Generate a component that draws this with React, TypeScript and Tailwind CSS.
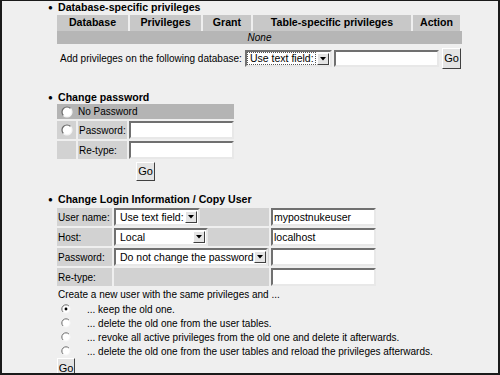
import React from "react";

const font = { fontFamily: '"Liberation Sans", Arial, sans-serif' };

function Radio({ checked = false, size = 12 }: { checked?: boolean; size?: number }) {
  return (
    <svg width={size} height={size} viewBox="0 0 12 12" className="shrink-0">
      <circle cx="6" cy="6" r="5" fill="#ffffff" />
      <path d="M2.46 9.54 A5 5 0 0 1 9.54 2.46" fill="none" stroke="#6a6a6a" strokeWidth="1.2" />
      <path d="M9.54 2.46 A5 5 0 0 1 2.46 9.54" fill="none" stroke="#f4f4f4" strokeWidth="1.2" />
      {checked && <circle cx="6" cy="6" r="1.7" fill="#000" />}
    </svg>
  );
}

function Go({ className = "" }: { className?: string }) {
  return (
    <div
      className={
        "flex items-center justify-center bg-[#e4e4e4] border border-t-white border-l-white border-b-[#404040] border-r-[#404040] text-[11px] text-black " +
        className
      }
    >
      Go
    </div>
  );
}

function Input({ value = "", className = "" }: { value?: string; className?: string }) {
  return (
    <div
      className={
        "bg-white border-2 border-t-[#707070] border-l-[#707070] border-b-[#e8e8e8] border-r-[#e8e8e8] text-[10.5px] leading-none flex items-center pl-[1px] whitespace-nowrap " +
        className
      }
    >
      {value}
    </div>
  );
}

function Select({ value, className = "", dotted = false }: { value: string; className?: string; dotted?: boolean }) {
  return (
    <div
      className={
        "bg-white border-2 border-t-[#707070] border-l-[#707070] border-b-[#e8e8e8] border-r-[#e8e8e8] flex items-center justify-between text-[10.5px] leading-none whitespace-nowrap " +
        className
      }
    >
      <span className={dotted ? "outline outline-1 outline-dotted outline-[#555] ml-[1px] pl-[2px] pr-[1px]" : "pl-[4px]"}>{value}</span>
      <div className="w-[12px] h-[12px] mr-[1px] bg-[#e4e4e4] border border-t-white border-l-white border-b-[#404040] border-r-[#404040] flex items-center justify-center shrink-0">
        <svg width="6" height="4" viewBox="0 0 6 4">
          <path d="M0 0 H6 L3 3.5 Z" fill="#000" />
        </svg>
      </div>
    </div>
  );
}

function Heading({ children }: { children: React.ReactNode }) {
  return (
    <div className="flex items-center h-[13px] text-[10.6px] font-bold text-black leading-none whitespace-nowrap">
      <span className="w-[9px] ml-[46px] text-[8px]">●</span>
      <span className="ml-[1px]">{children}</span>
    </div>
  );
}

export default function App() {
  return (
    <div
      style={font}
      className="w-[500px] h-[375px] overflow-hidden bg-[#efefef] border-2 border-t border-[#1a1a1a] text-black flex flex-col text-[10px] whitespace-nowrap"
    >
      {/* Section 1 */}
      <div>
        <Heading>Database-specific privileges</Heading>
        <div className="ml-[55px] mt-[1px] w-[405px] flex flex-col gap-[1px]">
          <div className="grid grid-cols-[71px_71px_48px_158px_47px] gap-[2px] h-[15px] text-[10.6px] font-bold">
            <div className="bg-[#c8c8c8] flex items-center justify-center">Database</div>
            <div className="bg-[#c8c8c8] flex items-center justify-center">Privileges</div>
            <div className="bg-[#c8c8c8] flex items-center justify-center">Grant</div>
            <div className="bg-[#c8c8c8] flex items-center justify-center">Table-specific privileges</div>
            <div className="bg-[#c8c8c8] flex items-center justify-center">Action</div>
          </div>
          <div className="bg-[#b6b6b6] h-[13px] flex items-center justify-center italic">None</div>
        </div>
        <div className="ml-[57px] mt-[4px] flex items-center h-[21px]">
          <span className="w-[185px] pl-[1px]">Add privileges on the following database:</span>
          <Select value="Use text field:" dotted className="w-[87px] h-[17px] ml-[1px]" />
          <Input className="w-[105px] h-[17px] ml-[2px]" />
          <Go className="w-[19px] h-[21px] ml-[3px]" />
        </div>
      </div>

      {/* Section 2 */}
      <div className="mt-[22px]">
        <Heading>Change password</Heading>
        <div className="ml-[55px] w-[177px] flex flex-col gap-[2px]">
          <div className="bg-[#b4b4b4] h-[15px] flex items-center">
            <div className="w-[20px] flex justify-center">
              <Radio />
            </div>
            <span className="ml-[1px]">No Password</span>
          </div>
          <div className="h-[18px] flex gap-[2px]">
            <div className="w-[19px] bg-[#d2d2d2] flex items-center justify-center">
              <Radio />
            </div>
            <div className="w-[49px] bg-[#d2d2d2] flex items-center pl-[1px]">Password:</div>
            <Input className="flex-1 h-[18px]" />
          </div>
          <div className="h-[18px] flex gap-[2px]">
            <div className="w-[19px] bg-[#d2d2d2]" />
            <div className="w-[49px] bg-[#d2d2d2] flex items-center pl-[1px]">Re-type:</div>
            <Input className="flex-1 h-[18px]" />
          </div>
        </div>
        <div className="ml-[55px] w-[177px] flex justify-center mt-[3px]">
          <Go className="w-[19px] h-[19px]" />
        </div>
      </div>

      {/* Section 3 */}
      <div className="mt-[12px]">
        <Heading>Change Login Information / Copy User</Heading>
        <div className="ml-[55px] mt-[2px] flex flex-col gap-[2px]">
          <div className="flex h-[18px] gap-[2px]">
            <div className="w-[55px] bg-[#d2d2d2] flex items-center pl-[1px]">User name:</div>
            <div className="w-[155px] bg-[#d2d2d2] flex items-center">
              <Select value="Use text field:" className="w-[86px] h-[18px]" />
            </div>
            <Input value="mypostnukeuser" className="w-[105px] h-[18px]" />
          </div>
          <div className="flex h-[18px] gap-[2px]">
            <div className="w-[55px] bg-[#d2d2d2] flex items-center pl-[1px]">Host:</div>
            <div className="w-[155px] bg-[#d2d2d2] flex items-center">
              <Select value="Local" className="w-[94px] h-[18px]" />
            </div>
            <Input value="localhost" className="w-[105px] h-[18px]" />
          </div>
          <div className="flex h-[18px] gap-[2px]">
            <div className="w-[55px] bg-[#d2d2d2] flex items-center pl-[1px]">Password:</div>
            <div className="w-[155px] bg-[#d2d2d2] flex items-center">
              <Select value="Do not change the password" className="w-[154px] h-[18px]" />
            </div>
            <Input className="w-[105px] h-[18px]" />
          </div>
          <div className="flex h-[18px] gap-[2px]">
            <div className="w-[55px] bg-[#d2d2d2] flex items-center pl-[1px]">Re-type:</div>
            <div className="w-[155px] bg-[#d2d2d2]" />
            <Input className="w-[105px] h-[18px]" />
          </div>
        </div>
        <div className="ml-[56px] mt-[2px] leading-[14px]">
          Create a new user with the same privileges and ...
        </div>
        <div className="ml-[59px] flex flex-col">
          {[
            "... keep the old one.",
            "... delete the old one from the user tables.",
            "... revoke all active privileges from the old one and delete it afterwards.",
            "... delete the old one from the user tables and reload the privileges afterwards.",
          ].map((t, i) => (
            <div key={i} className="h-[14px] flex items-center gap-[16px]">
              <Radio checked={i === 0} size={10} />
              <span>{t}</span>
            </div>
          ))}
        </div>
        <Go className="ml-[55px] w-[18px] h-[20px]" />
      </div>
    </div>
  );
}
